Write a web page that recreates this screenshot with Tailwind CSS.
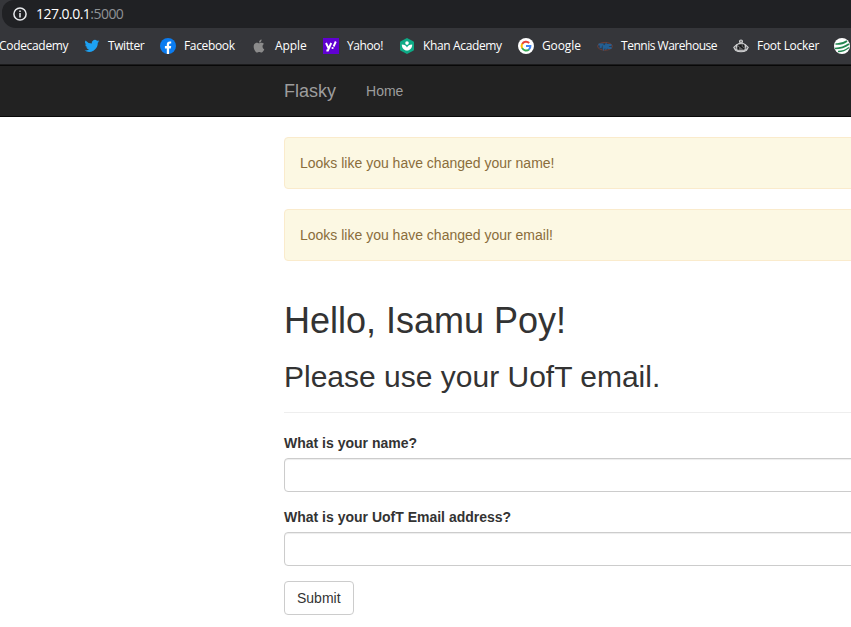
<!DOCTYPE html>
<html lang="en">
<head>
<meta charset="utf-8">
<title>Flasky</title>
<script src="https://cdn.jsdelivr.net/npm/@tailwindcss/browser@4"></script>
</head>
<body class="w-[851px] h-[627px] overflow-hidden bg-white font-['Liberation_Sans',Arial,sans-serif] text-sm leading-5 text-[#333]">
<header class="h-[65px] overflow-hidden bg-[#35363a] border-b border-[#1b1b1c] font-['Open_Sans','Noto_Sans',sans-serif] text-white">
  <div class="ml-0.5 h-7 -mr-8 flex items-center rounded-bl-[14px] rounded-tl-[12px] bg-[#202124] pl-[11px]">
    <svg class="size-[14px] shrink-0" viewBox="0 0 14 14" fill="none" stroke="#e8eaed" stroke-width="1.5"><circle cx="7" cy="7" r="6.1"/><path d="M7 6v4.4M7 3.4v1.5"/></svg>
    <span class="ml-[9px] text-[14px] leading-5 tracking-[-0.53px]">127.0.0.1<span class="text-[#8f9296]">:5000</span></span>
  </div>
  <nav class="flex h-9 items-center whitespace-nowrap text-[12px] leading-4 tracking-[-0.3px]">
    <a class="w-[84px] shrink-0"><span class="-ml-px tracking-[-0.32px]">Codecademy</span></a>
    <a class="flex w-[76px] shrink-0 items-center gap-2">
      <svg class="size-4 shrink-0" viewBox="0 0 24 24" fill="#1da1f2"><path d="M23 5a9 9 0 0 1-2.6.7 4.500 4.500 0 0 0 2-2.500 9 9 0 0 1-2.900 1.100 4.550 4.550 0 0 0-7.800 4.100A13 13 0 0 1 2.300 3.700a4.550 4.550 0 0 0 1.400 6.100 4.500 4.500 0 0 1-2-.6 4.550 4.550 0 0 0 3.600 4.500 4.500 4.500 0 0 1-2 .1 4.550 4.550 0 0 0 4.200 3.100A9 9 0 0 1 .8 18.800a13 13 0 0 0 19.900-11.500A9 9 0 0 0 23 5z"/></svg><span class="tracking-[-0.42px]">Twitter</span></a>
    <a class="flex w-[91px] shrink-0 items-center gap-2">
      <svg class="size-4 shrink-0" viewBox="0 0 16 16"><circle cx="8" cy="8" r="8" fill="#0b7cf0"/><path fill="#fff" d="M6.800 16v-5.500H4.900V8.100h1.900V6.500c0-2 1.100-3.100 2.900-3.100.8 0 1.500.1 1.500.1v1.900h-.9c-.9 0-1.200.6-1.200 1.200v1.500h2.100l-.4 2.400H9.100V16z"/></svg><span class="tracking-[-0.34px]">Facebook</span></a>
    <a class="flex w-[72px] shrink-0 items-center gap-2">
      <svg class="size-4 shrink-0" viewBox="0 0 24 24" fill="#8b8b8b"><path d="M17.300 12.600c0-2.400 2-3.500 2.100-3.600-1.200-1.700-2.900-1.900-3.600-1.900-1.500-.2-3 .9-3.700.9-.8 0-2-.9-3.200-.9-1.700 0-3.200 1-4.100 2.400-1.700 3-.4 7.500 1.300 9.900.8 1.200 1.800 2.500 3.100 2.500 1.200-.1 1.700-.8 3.200-.8s1.900.8 3.200.8c1.300 0 2.200-1.200 3-2.400.9-1.400 1.300-2.700 1.300-2.800-.1 0-2.600-1-2.600-4.100zM14.900 5.500c.7-.8 1.100-1.900 1-3.100-1 .1-2.200.7-2.800 1.500-.7.8-1.200 1.900-1 3 1 .1 2.100-.6 2.800-1.400z"/></svg><span class="tracking-[-0.1px]">Apple</span></a>
    <a class="flex w-[76px] shrink-0 items-center gap-2">
      <svg class="size-4 shrink-0" viewBox="0 0 16 16"><path fill="#6001d2" d="M0 0h16v16H0z"/><path d="M3 5l2.400 5M8.200 5l-3.300 7.500H3.400M12.800 3.500l-2.200 5" fill="none" stroke="#fff" stroke-width="1.900"/><circle cx="9.600" cy="10" r="1.100" fill="#fff"/></svg><span class="tracking-[-0.4px]">Yahoo!</span></a>
    <a class="flex w-[119px] shrink-0 items-center gap-2">
      <svg class="size-4 shrink-0" viewBox="0 0 16 16"><path fill="#0eaa86" d="M8 0l6.200 3.200q.8.400.8 1.200v7.200q0 .8-.8 1.200L8 16l-6.200-3.200q-.8-.4-.8-1.200V4.400q0-.8.800-1.200z"/><circle cx="8" cy="5.100" r="1.800" fill="#fff"/><path fill="#fff" d="M2.800 6.500c2.600 0 4.400 1 5.200 2.900.8-1.900 2.600-2.900 5.200-2.900 0 3.600-2.200 6-5.200 6s-5.200-2.400-5.200-6z"/></svg><span class="tracking-[-0.36px]">Khan Academy</span></a>
    <a class="flex w-[79px] shrink-0 items-center gap-2">
      <svg class="size-4 shrink-0" viewBox="0 0 16 16" fill="none" stroke-width="2"><circle cx="8" cy="8" r="8" fill="#fff"/><path stroke="#ea4335" d="M4.200 5.900A4.400 4.400 0 0 1 11.200 5"/><path stroke="#fbbc05" d="M4.200 5.800a4.400 4.400 0 0 0 0 4.400"/><path stroke="#34a853" d="M4.200 10.100a4.400 4.400 0 0 0 6.800 1.300"/><path stroke="#4285f4" d="M8 8h4.400a4.400 4.400 0 0 1-1.500 3.500"/></svg><span class="tracking-[-0.1px]">Google</span></a>
    <a class="flex w-[136px] shrink-0 items-center gap-2">
      <svg class="size-4 shrink-0" viewBox="0 0 16 16" fill="none"><ellipse cx="8" cy="8.300" rx="7.400" ry="3.900" fill="#2b3c50" stroke="#713e32"/><path stroke="#245f93" stroke-width="2" d="M1.500 6.500h5M4.300 6.500L3.500 10M6.500 7l.3 3.200 2-3.200.4 3.200L12 7M9 7h5.500M10.500 10h4"/></svg><span class="tracking-[-0.48px]">Tennis Warehouse</span></a>
    <a class="flex w-[101px] shrink-0 items-center gap-2">
      <svg class="size-4 shrink-0" viewBox="0 0 16 16" fill="none" stroke="#d0d1d2" stroke-width="1.100"><circle cx="8" cy="3.500" r="1.500" fill="#777"/><path fill="#5f6062" d="M3.700 7Q5 5.500 8 5.300T12.300 7l1 5.500Q8 15 2.700 12.500z"/><path d="M4 6.500L.8 9.300l1.300 2.500h2.500M12 6.500l3.200 2.800-1.300 2.500h-2.500"/><path stroke="#161617" stroke-width="1.300" d="M5.500 7l5.500 4M8 6.500v2M10.500 6.800v2M5.300 9v2.500"/><path d="M4 12.800h8"/></svg><span class="tracking-[-0.28px]">Foot Locker</span></a>
    <a class="shrink-0"><svg class="size-4" viewBox="0 0 16 16" fill="none" stroke="#238650"><circle cx="8" cy="8" r="8" fill="#fff" stroke="none"/><path stroke-width="1.600" d="M1.500 6Q8 6.500 13 3M1 10.500Q9 10.300 15 6"/><path stroke-width="1.500" d="M4 13.500Q10 13.500 15 9.500"/></svg></a>
  </nav>
</header>
<nav class="flex h-[52px] items-center border-y border-[#080808] bg-[#222] pl-[284px] text-[#9d9d9d]">
  <a class="text-lg leading-5">Flasky</a><a class="ml-[30px]">Home</a>
</nav>
<main class="ml-[284px] w-[600px] pt-5">
  <div class="mb-5 h-[52px] rounded border border-[#faebcc] bg-[#fcf8e3] p-[15px] text-[#8a6d3b]">Looks like you have changed your name!</div>
  <div class="h-[52px] rounded border border-[#faebcc] bg-[#fcf8e3] p-[15px] text-[#8a6d3b]">Looks like you have changed your email!</div>
  <div class="mt-10 border-b border-[#eee] pb-[19px]">
    <h1 class="text-[36px] leading-[39px]">Hello, Isamu Poy!</h1>
    <h2 class="mt-5 text-[30px] leading-[33px]">Please use your UofT email.</h2>
  </div>
  <form class="pt-5">
    <label class="mb-[5px] block font-bold" for="name">What is your name?</label>
    <input id="name" class="mb-[15px] block h-[34px] w-full rounded border border-[#ccc] px-3 shadow-[inset_0_1px_1px_rgba(0,0,0,0.075)]">
    <label class="mb-[5px] block font-bold" for="email">What is your UofT Email address?</label>
    <input id="email" class="mb-[15px] block h-[34px] w-full rounded border border-[#ccc] px-3 shadow-[inset_0_1px_1px_rgba(0,0,0,0.075)]">
    <button type="button" class="h-[34px] rounded border border-[#ccc] bg-white px-3">Submit</button>
  </form>
</main>
</body>
</html>
